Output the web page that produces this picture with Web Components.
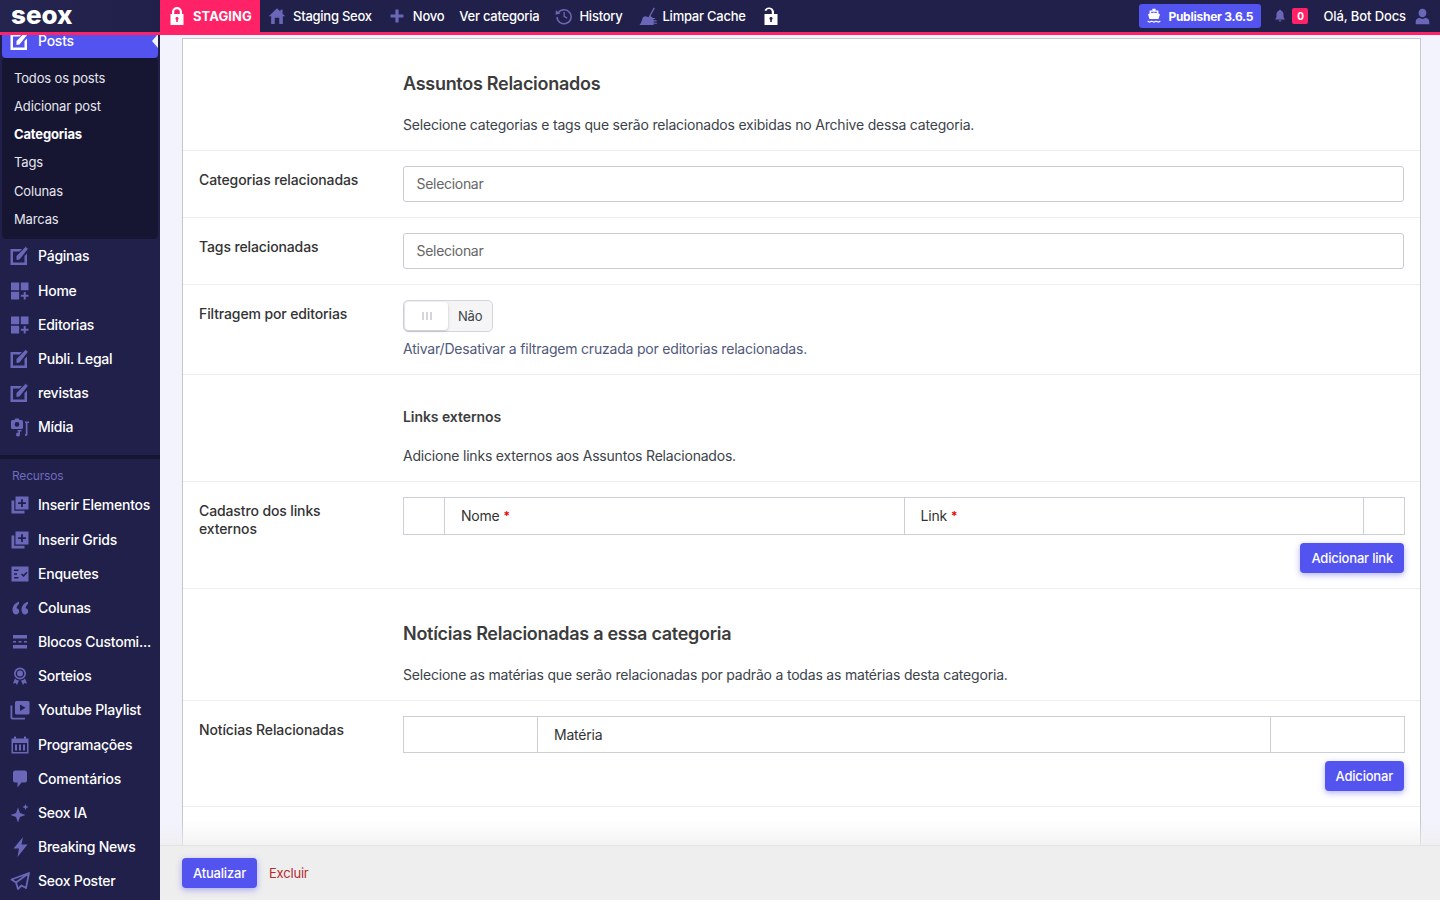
<!DOCTYPE html>
<html lang="pt-BR">
<head>
<meta charset="utf-8">
<title>Editar categoria</title>
<style>
    html, body { margin: 0; height: 100%; overflow: hidden; }
    body {
        font-family: Inter, "Liberation Sans", sans-serif;
        font-size: 14px;
        letter-spacing: -0.2px;
        background: #f3f3fd;
        color: #3c434a;
    }
    sx-app { height: 100vh; }
    sx-repeater b { color: #e60000; font-size: 12px; font-weight: 600; }
</style>
</head>
<body>
<sx-app>
    <sx-topbar slot="top"></sx-topbar>
    <sx-sidebar slot="side">
        <sx-nav-item icon="edit" active>Posts</sx-nav-item>
        <sx-submenu>
            <sx-sub-item>Todos os posts</sx-sub-item>
            <sx-sub-item>Adicionar post</sx-sub-item>
            <sx-sub-item current>Categorias</sx-sub-item>
            <sx-sub-item>Tags</sx-sub-item>
            <sx-sub-item>Colunas</sx-sub-item>
            <sx-sub-item>Marcas</sx-sub-item>
        </sx-submenu>
        <sx-nav-item icon="edit">Páginas</sx-nav-item>
        <sx-nav-item icon="grid">Home</sx-nav-item>
        <sx-nav-item icon="grid">Editorias</sx-nav-item>
        <sx-nav-item icon="edit">Publi. Legal</sx-nav-item>
        <sx-nav-item icon="edit">revistas</sx-nav-item>
        <sx-nav-item icon="media">Mídia</sx-nav-item>
        <sx-nav-section>Recursos</sx-nav-section>
        <sx-nav-item icon="insert">Inserir Elementos</sx-nav-item>
        <sx-nav-item icon="insert">Inserir Grids</sx-nav-item>
        <sx-nav-item icon="poll">Enquetes</sx-nav-item>
        <sx-nav-item icon="quote">Colunas</sx-nav-item>
        <sx-nav-item icon="blocks">Blocos Customi...</sx-nav-item>
        <sx-nav-item icon="award">Sorteios</sx-nav-item>
        <sx-nav-item icon="playlist">Youtube Playlist</sx-nav-item>
        <sx-nav-item icon="calendar">Programações</sx-nav-item>
        <sx-nav-item icon="comment">Comentários</sx-nav-item>
        <sx-nav-item icon="sparkle">Seox IA</sx-nav-item>
        <sx-nav-item icon="bolt">Breaking News</sx-nav-item>
        <sx-nav-item icon="plane">Seox Poster</sx-nav-item>
    </sx-sidebar>
    <sx-card slot="main">
        <sx-intro-row heading="Assuntos Relacionados" height="112">Selecione categorias e tags que serão relacionados exibidas no Archive dessa categoria.</sx-intro-row>
        <sx-field-row label="Categorias relacionadas"><sx-select>Selecionar</sx-select></sx-field-row>
        <sx-field-row label="Tags relacionadas"><sx-select>Selecionar</sx-select></sx-field-row>
        <sx-field-row label="Filtragem por editorias">
            <sx-toggle>Não</sx-toggle>
            <sx-help>Ativar/Desativar a filtragem cruzada por editorias relacionadas.</sx-help>
        </sx-field-row>
        <sx-intro-row heading="Links externos" small height="107">Adicione links externos aos Assuntos Relacionados.</sx-intro-row>
        <sx-field-row label="Cadastro dos links externos">
            <sx-repeater columns="40px 1fr 1fr 41px" action="Adicionar link" head="38">
                <span></span><span>Nome <b>*</b></span><span>Link <b>*</b></span><span></span>
            </sx-repeater>
        </sx-field-row>
        <sx-intro-row heading="Notícias Relacionadas a essa categoria" height="112">Selecione as matérias que serão relacionadas por padrão a todas as matérias desta categoria.</sx-intro-row>
        <sx-field-row label="Notícias Relacionadas">
            <sx-repeater columns="133px 1fr 134px" action="Adicionar" head="37">
                <span></span><span>Matéria</span><span></span>
            </sx-repeater>
        </sx-field-row>
    </sx-card>
    <sx-savebar slot="foot"></sx-savebar>
</sx-app>

<script>
// all icons share a 20x20 box and take their colour from currentColor
const ICONS = {
    edit: '<path d="M.5 3H12L9.500 5.500H3v11h11.500V10L17 7.500V19H.5z"/><path d="M6.500 10 14.500 2 16 .5l.5 1.500 1.500.5-1 1.500-7.500 9.500-3 .5z"/>',
    grid: '<path d="M1 1.500h8.200v7.700H1zM10.800 1.500h7.700v7.700h-7.700zM1 10.800h8.200v7.700H1zM13.700 11h2v2.800h2.800v1.900h-2.800v2.800h-2v-2.800h-2.800v-1.900h2.800z"/>',
    media: '<path fill-rule="evenodd" d="M2.500 3h2l.8-1.500h3.400L9.500 3h2A1.500 1.500 0 0 1 13 4.500v6A1.500 1.500 0 0 1 11.500 12h-9A1.500 1.500 0 0 1 1 10.500v-6A1.500 1.500 0 0 1 2.500 3zM7 5a2.400 2.400 0 1 0 0 4.800A2.400 2.400 0 0 0 7 5z"/><path d="M15 4.500h4V6h-1.500v10.500a2.300 2.300 0 0 1-2.500 2.500v-1.800c.5 0 .8-.3.800-.7V6H15z"/><path d="M7.500 13h4v1.500H10v3a2 2 0 1 1-1.500-1.900v-1.100h-1z"/>',
    insert: '<path fill-rule="evenodd" d="M5.500 1.500h13v13h-13zm5.600 2.800v3h-3v1.800h3v3h1.800v-3h3V7.300h-3v-3z"/><path d="M1.500 5.500h2.800v10.200h10.200v2.800h-13z"/>',
    poll: '<path fill-rule="evenodd" d="M1.500 2.500h17v15h-17zM4 5.500V7h4.500V5.500zM4 9.200v1.500h3V9.200zM4 12.900v1.500h4.500v-1.500zm7-2.500 2.500 2.500 4-4.200-1-1-3 3.100-1.500-1.400z"/>',
    quote: '<path d="M9 3.500C5 5 2.500 8 2.500 12c0 2.700 1.500 4.500 3.500 4.500 1.800 0 3.200-1.400 3.200-3.200 0-1.800-1.200-3-2.700-3.100.3-1.800 1.300-3.200 2.500-4.400zM18 3.500c-4 1.500-6.500 4.500-6.500 8.500 0 2.700 1.500 4.500 3.500 4.500 1.800 0 3.200-1.400 3.200-3.200 0-1.800-1.200-3-2.700-3.100.3-1.800 1.300-3.200 2.500-4.400z"/>',
    blocks: '<path d="M3 3h14v3.500H3zM3 9h3v1.500H3zM8.500 9h3v1.500h-3zM14 9h3v1.500h-3zM3 13h14v3.500H3z"/>',
    award: '<path fill-rule="evenodd" d="M10 1.500a6 6 0 1 1 0 12 6 6 0 0 1 0-12zm0 1.700a4.300 4.300 0 1 0 0 8.600 4.300 4.300 0 0 0 0-8.600zM10 4.500a3 3 0 1 1 0 6 3 3 0 0 1 0-6z"/><path d="M5 12.500 3 17.500l2.600-.4 1.400 2 2-4.500a7 7 0 0 1-4-2.100zM15 12.500l2 5-2.600-.4-1.400 2-2-4.500a7 7 0 0 0 4-2.100z"/>',
    playlist: '<path fill-rule="evenodd" d="M6.500 1H18a1.500 1.500 0 0 1 1.500 1.500V13a1.500 1.500 0 0 1-1.500 1.500H6.500A1.500 1.500 0 0 1 5 13V2.500A1.500 1.500 0 0 1 6.500 1zM10 4.500V11l5.500-3.250z"/><path d="M.5 5.500h1.800v11.700c0 .3.2.5.5.5H15v1.800H2.300A1.800 1.800 0 0 1 .5 17.700z"/>',
    calendar: '<path fill-rule="evenodd" d="M1.500 3.500H4v-2h2v2h8v-2h2v2h2.500v15h-17zM3 8v9h14V8zM5 9.500h2v6H5zm4 0h2v6H9zm4 0h2v6h-2z"/>',
    comment: '<path d="M5 1.500h10a2 2 0 0 1 2 2v8a2 2 0 0 1-2 2h-3.500L7.500 18.500v-5H5a2 2 0 0 1-2-2v-8a2 2 0 0 1 2-2z"/>',
    sparkle: '<path d="M8 4.500 10 10l5.500 2L10 14l-2 5.500L6 14 .5 12 6 10zM15.500 1l.9 2.100 2.100.9-2.100.9-.9 2.100-.9-2.100-2.100-.9 2.100-.9z"/>',
    bolt: '<path d="M13 0 3.500 11.500H9L7.500 20l10-12.500h-6z"/>',
    plane: '<path fill="none" stroke="currentColor" stroke-width="1.800" stroke-linejoin="round" d="M19 2 1.500 8.500l4.500 3 2 6.500 3.500-3.500 4.500 2.500zM19 2 6 11.500 8 18"/>',
    lock: '<path fill-rule="evenodd" d="M5 8V6a5 5 0 0 1 10 0v2h1.500v11h-13V8zm2.200 0h5.600V6a2.800 2.800 0 0 0-5.600 0zM10 11a1.500 1.500 0 0 0-.8 2.800V16h1.600v-2.200A1.500 1.500 0 0 0 10 11z"/>',
    unlock: '<path fill-rule="evenodd" d="M13 8h3.500v11h-13V8h7.300V5.500a2.800 2.800 0 0 0-5.500-.5L3.500 4.500a5 5 0 0 1 9.500 1zM10 11a1.500 1.500 0 0 0-.8 2.800V16h1.600v-2.200A1.500 1.500 0 0 0 10 11z"/>',
    home: '<path d="M10 1.500 .8 10.200h2.700V19h13v-8.800h2.700l-3-2.800V3h-2.500v2zM7.500 12h5v7h-5z" fill-rule="evenodd"/>',
    plus: '<path d="M8 2h4v6h6v4h-6v6H8v-6H2V8h6z"/>',
    history: '<path fill="none" stroke="currentColor" stroke-width="1.700" d="M3.600 6.500A7.800 7.800 0 1 1 2.300 11"/><path d="M1 3.500l5 3.800-5.300 1.200z"/><path d="M9.400 5.500h1.500V10l3 1.800-.8 1.200-3.700-2.300z"/>',
    broom: '<path d="M16.500 .5l1.300.8-4.600 8.200 1.800 1.200c.9.700 1.500 1.700 1.500 3V19H1.500c1.500-1.800 2.600-4.500 3.200-7 .3-1.200 1.800-2.300 3.300-2.200l3 .9z"/><path d="M15.500 14h4v1.200h-4zM14.500 11.500H18v1.200h-3.500zM16 16.500h4v1.200h-4z"/>',
    bell: '<path d="M10 1c.9 0 1.500.6 1.500 1.400 2.300.6 3.500 2.600 3.500 5v4.100L17 15H3l2-3.500V7.400c0-2.400 1.200-4.400 3.500-5C8.500 1.600 9.100 1 10 1zM8 16h4a2 2 0 0 1-4 0z"/>',
    user: '<path d="M10 1a4.600 4.600 0 0 1 4.600 5c0 3-2 5-4.600 5S5.400 9 5.400 6A4.600 4.600 0 0 1 10 1zM6.500 11.500c1 .8 2.200 1.300 3.500 1.300s2.500-.5 3.500-1.300c2.700.5 4.500 2 4.500 4.500v3H2v-3c0-2.500 1.800-4 4.500-4.500z"/>',
    ship: '<path fill-rule="evenodd" d="M8 1h4v2h3.500v4l2 .8-1.800 6H4.300l-1.800-6 2-.8V3H8zM6.500 4.800v1.900L10 5.500l3.500 1.200V4.800z"/><path d="M2 16c1.300 0 1.700.9 2.700.9S6.300 16 7.300 16s1.700.9 2.700.9 1.700-.9 2.700-.9 1.600.9 2.600.9 1.400-.9 2.700-.9v1.500c-1 0-1.500.9-2.700.9s-1.600-.9-2.600-.9-1.500.9-2.700.9-1.700-.9-2.700-.9-1.400.9-2.600.9S3 17.500 2 17.500z"/>'
};

// small helper so each class is not repeating the shadow boilerplate
class SxElement extends HTMLElement {
    constructor() {
        super();
        this.attachShadow({ mode: 'open' });
    }
    connectedCallback() {
        this.shadowRoot.innerHTML = `<style>${this.css()}</style>${this.html()}`;
    }
    css() { return ':host { display: block; }'; }
    html() { return '<slot></slot>'; }
}

class SxIcon extends SxElement {
    css() {
        return `:host { display: inline-flex; flex: none; width: var(--size, 20px); height: var(--size, 20px); }
            svg { width: 100%; height: 100%; fill: currentColor; display: block; }`;
    }
    html() {
        return `<svg viewBox="0 0 20 20" aria-hidden="true">${ICONS[this.getAttribute('name')] || ''}</svg>`;
    }
}

class SxApp extends SxElement {
    css() {
        return `:host { display: grid; grid-template-columns: 160px 1fr; grid-template-rows: 35px 1fr 55px; overflow: hidden; }
            .top { grid-column: 1 / -1; z-index: 3; }
            .side { grid-row: 2 / 4; min-height: 0; overflow: hidden; }
            .main { padding: 3px 19px 0 22px; min-height: 0; overflow: hidden; }
            .foot { grid-column: 2; z-index: 2; }`;
    }
    html() {
        return `<div class="top"><slot name="top"></slot></div>
            <div class="side"><slot name="side"></slot></div>
            <div class="main"><slot name="main"></slot></div>
            <div class="foot"><slot name="foot"></slot></div>`;
    }
}

class SxTopbar extends SxElement {
    css() {
        return `:host { display: flex; height: 32px; background: #20204a; border-bottom: 3px solid #ff2266; color: #fff; font-size: 13px; font-weight: 500; letter-spacing: -.25px; align-items: stretch; white-space: nowrap; }
            .logo { width: 160px; box-sizing: border-box; padding-left: 11px; font-size: 26px; line-height: 29px; font-weight: 800; letter-spacing: 0; color: #fff; background: linear-gradient(90deg, #24244f, #20204a); }
            .staging { width: 100px; box-sizing: border-box; background: #ff2266; display: flex; align-items: center; padding-left: 7px; gap: 6px; font-weight: 700; letter-spacing: .1px; }
            .staging sx-icon { --size: 20px; }
            .items { display: flex; align-items: center; flex: 1; padding-left: 8px; }
            .item { display: flex; align-items: center; gap: 6px; }
            .item sx-icon { color: #6a66b8; --size: 18px; }
            .spacer { flex: 1; }
            .publisher { display: flex; align-items: center; gap: 6px; height: 24px; width: 122px; box-sizing: border-box; padding-left: 7px; border-radius: 3px; background: #5353f0; font-size: 12px; font-weight: 700; letter-spacing: -.25px; }
            .publisher sx-icon { --size: 16px; color: #fff; }
            .badge { width: 16px; height: 16px; border-radius: 2px; background: #ff2266; font-size: 10px; font-weight: 700; line-height: 16px; text-align: center; }`;
    }
    html() {
        return `<div class="logo">seox</div>
            <div class="staging"><sx-icon name="lock"></sx-icon>STAGING</div>
            <div class="items">
                <div class="item" style="gap:7px"><sx-icon name="home"></sx-icon>Staging Seox</div>
                <div class="item" style="margin-left:17px;gap:8px"><sx-icon name="plus" style="--size:16px"></sx-icon>Novo</div>
                <div class="item" style="margin-left:15px">Ver categoria</div>
                <div class="item" style="margin-left:16px"><sx-icon name="history"></sx-icon>History</div>
                <div class="item" style="margin-left:15px"><sx-icon name="broom" style="--size:19px"></sx-icon>Limpar Cache</div>
                <div class="item" style="margin-left:15px"><sx-icon name="unlock" style="color:#fff;--size:20px"></sx-icon></div>
                <div class="spacer"></div>
                <div class="publisher"><sx-icon name="ship"></sx-icon>Publisher 3.6.5</div>
                <div class="item" style="margin-left:12px"><sx-icon name="bell" style="--size:14px"></sx-icon></div>
                <div class="badge" style="margin-left:5px">0</div>
                <div class="item" style="margin-left:15px;margin-right:9px;gap:8px;letter-spacing:-.1px">Olá, Bot Docs<sx-icon name="user" style="--size:17px"></sx-icon></div>
            </div>`;
    }
}

class SxSidebar extends SxElement {
    css() {
        return `:host { display: block; height: 100%; background: #20204a; overflow: hidden; }
            .scroll { margin-top: -11px; }`;
    }
    html() { return '<div class="scroll"><slot></slot></div>'; }
}

class SxNavItem extends SxElement {
    css() {
        return `:host { display: flex; align-items: center; gap: 8px; height: 34.18px; box-sizing: border-box; padding-left: 10px; color: #fff; font-size: 14px; font-weight: 500; letter-spacing: -.24px; white-space: nowrap; position: relative; }
            span { line-height: 12px; }
            sx-icon { color: #6a66b8; }
            :host([active]) { margin: 0 2px; padding-left: 8px; background: #5353f0; border-radius: 0 0 4px 4px; }
            :host([active]) sx-icon { color: #fff; }
            .notch { position: absolute; right: 0; top: 50%; margin-top: -7px; border: 7px solid transparent; border-left-width: 0; border-right: 6px solid #f3f3fd; }`;
    }
    html() {
        const notch = this.hasAttribute('active') ? '<span class="notch"></span>' : '';
        return `<sx-icon name="${this.getAttribute('icon')}"></sx-icon><span><slot></slot></span>${notch}`;
    }
}

class SxSubmenu extends SxElement {
    css() { return ':host { display: block; margin: 0 2px; padding: 5.7px 0 6.3px; background: #161632; border-radius: 4px; }'; }
}

class SxSubItem extends SxElement {
    css() {
        return `:host { display: block; height: 28.2px; line-height: 28.2px; padding-left: 12px; font-size: 13px; letter-spacing: -.15px; color: #e6e6f0; }
            :host([current]) { color: #fff; font-weight: 700; }`;
    }
}

class SxNavSection extends SxElement {
    css() {
        return `:host { display: block; margin-top: 11px; border-top: 4px solid #161632; height: 29px; line-height: 34px; padding-left: 12px; font-size: 12px; color: #6f6bbd; }`;
    }
}

class SxCard extends SxElement {
    css() { return ':host { display: block; background: #fff; border: 1px solid #c6c6ce; border-bottom: 0; padding-bottom: 120px; }'; }
}

class SxIntroRow extends SxElement {
    css() {
        return `:host { display: block; box-sizing: border-box; border-bottom: 1px solid #eeeeee; padding-left: 220px; color: #3c434a; }
            h2 { margin: 0; font-size: 18px; line-height: 22px; font-weight: 600; letter-spacing: -.28px; color: #3c3c3c; padding-top: 34px; }
            p { margin: 0; padding-top: 19px; font-size: 14px; line-height: 22px; }
            :host([small]) h2 { font-size: 14px; line-height: 20px; letter-spacing: -.07px; padding-top: 32px; }
            :host([small]) p { padding-top: 18px; }`;
    }
    html() {
        this.style.height = this.getAttribute('height') + 'px';
        return `<h2>${this.getAttribute('heading')}</h2><p><slot></slot></p>`;
    }
}

class SxFieldRow extends SxElement {
    css() {
        return `:host { display: grid; grid-template-columns: 220px 1fr; border-bottom: 1px solid #eeeeee; }
            label { padding: 20px 40px 0 16px; font-size: 14px; line-height: 18px; font-weight: 500; letter-spacing: -.12px; color: #333; }
            .field { padding: 15px 16px 15px 0; min-width: 0; }`;
    }
    html() {
        return `<label>${this.getAttribute('label')}</label><div class="field"><slot></slot></div>`;
    }
}

class SxSelect extends SxElement {
    css() {
        return `:host { display: block; box-sizing: border-box; height: 36px; line-height: 34px; padding-left: 12.5px; border: 1px solid #c9ccd1; border-radius: 3px; background: #fff; font-size: 14px; letter-spacing: -.3px; color: #666; }`;
    }
}

class SxToggle extends SxElement {
    css() {
        return `:host { display: flex; align-items: center; box-sizing: border-box; width: 90px; height: 32px; border: 1px solid #d5d5e0; border-radius: 5px; background: #f5f5f6; font-size: 13px; color: #3c434a; }
            .knob { width: 43px; height: 28px; margin-left: 1px; border-radius: 4px; background: #fff; box-shadow: 0 1px 3px rgba(0,0,0,.22); display: flex; align-items: center; justify-content: center; gap: 2px; }
            .knob i { width: 2px; height: 8px; background: #d5d5dd; }
            span { margin-left: 10px; }`;
    }
    html() { return '<div class="knob"><i></i><i></i><i></i></div><span><slot></slot></span>'; }
}

class SxHelp extends SxElement {
    css() { return ':host { display: block; margin: 8px 0 1px; font-size: 14px; line-height: 18px; color: #50597b; }'; }
}

class SxButton extends SxElement {
    css() {
        return `:host { display: inline-block; box-sizing: border-box; height: 30px; line-height: 30px; padding: 0 11px; border-radius: 4px; background: #5353f0; color: #fff; font-size: 13px; font-weight: 500; box-shadow: 0 2px 6px rgba(83,83,240,.45); white-space: nowrap; }`;
    }
}

class SxRepeater extends SxElement {
    css() {
        return `:host { display: block; margin-right: -1px; }
            .head { display: grid; box-sizing: border-box; border: 1px solid #ccd0d4; font-size: 14px; color: #333; }
            ::slotted(span) { display: flex; align-items: center; gap: 4px; padding: 0 0 1px 16px; border-left: 1px solid #ccd0d4; }
            ::slotted(span:first-child) { border-left: 0; }
            .actions { display: flex; justify-content: flex-end; margin: 8px 1px 0 0; }`;
    }
    html() {
        return `<div class="head" style="height:${this.getAttribute('head')}px;grid-template-columns:${this.getAttribute('columns')}"><slot></slot></div>
            <div class="actions"><sx-button>${this.getAttribute('action')}</sx-button></div>`;
    }
}

class SxSavebar extends SxElement {
    css() {
        return `:host { display: flex; align-items: center; gap: 12px; height: 55px; box-sizing: border-box; padding-left: 22px; background: #eeeeef; border-top: 1px solid #cccccf; position: relative; font-size: 13px; }
            .fade { position: absolute; left: 0; right: 0; bottom: 100%; height: 26px; background: linear-gradient(rgba(238,238,239,0), rgba(238,238,239,.7)); pointer-events: none; }
            a { color: #b32d2e; text-decoration: none; }`;
    }
    html() {
        return `<div class="fade"></div><sx-button>Atualizar</sx-button><a href="#">Excluir</a>`;
    }
}

customElements.define('sx-icon', SxIcon);
customElements.define('sx-app', SxApp);
customElements.define('sx-topbar', SxTopbar);
customElements.define('sx-sidebar', SxSidebar);
customElements.define('sx-nav-item', SxNavItem);
customElements.define('sx-submenu', SxSubmenu);
customElements.define('sx-sub-item', SxSubItem);
customElements.define('sx-nav-section', SxNavSection);
customElements.define('sx-card', SxCard);
customElements.define('sx-intro-row', SxIntroRow);
customElements.define('sx-field-row', SxFieldRow);
customElements.define('sx-select', SxSelect);
customElements.define('sx-toggle', SxToggle);
customElements.define('sx-help', SxHelp);
customElements.define('sx-button', SxButton);
customElements.define('sx-repeater', SxRepeater);
customElements.define('sx-savebar', SxSavebar);
</script>
</body>
</html>
